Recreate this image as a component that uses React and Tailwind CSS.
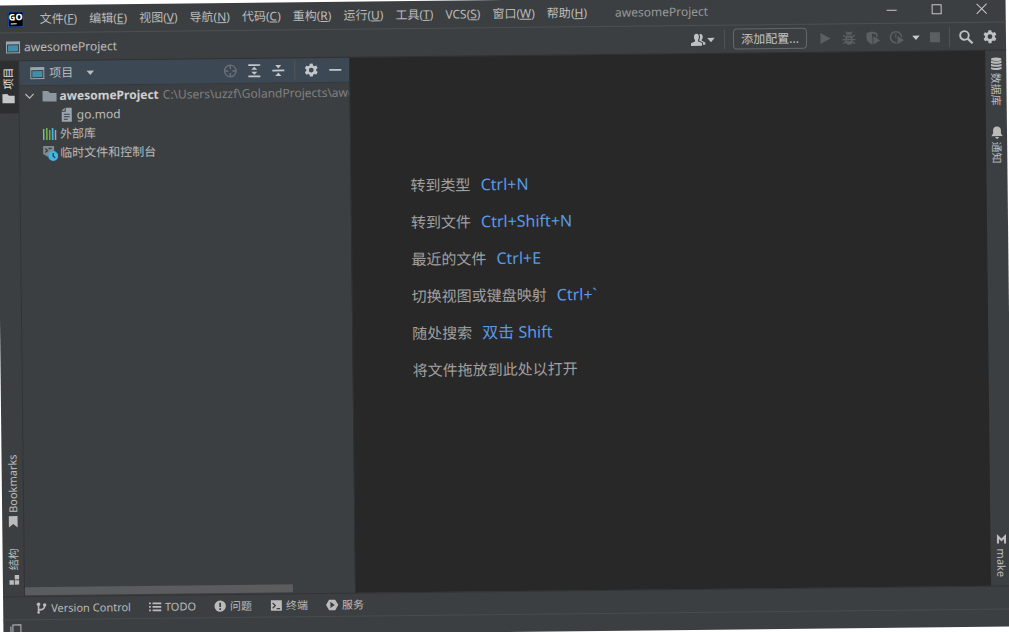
import React from 'react';

const MENUS = [
  ['文件', 'F'],
  ['编辑', 'E'],
  ['视图', 'V'],
  ['导航', 'N'],
  ['代码', 'C'],
  ['重构', 'R'],
  ['运行', 'U'],
  ['工具', 'T'],
  ['VCS', 'S'],
  ['窗口', 'W'],
  ['帮助', 'H'],
];

const HINTS = [
  { label: '转到类型', keys: 'Ctrl+N' },
  { label: '转到文件', keys: 'Ctrl+Shift+N' },
  { label: '最近的文件', keys: 'Ctrl+E' },
  { label: '切换视图或键盘映射', keys: 'Ctrl+`' },
  { label: '随处搜索', keys: '双击 Shift' },
  { label: '将文件拖放到此处以打开' },
];

const Icon = ({ size = 16, className = '', children }) => (
  <svg width={size} height={size} viewBox="0 0 16 16" fill="currentColor" className={`shrink-0 ${className}`} aria-hidden="true">
    {children}
  </svg>
);

const ProjectIcon = () => (
  <Icon>
    <path fill="#9aa7b0" d="M1 2h14v12H1z" />
    <path fill="#3c3f41" d="M2 5h12v8H2z" />
    <path fill="#3f8fa9" d="M3 6h10v6H3z" />
  </Icon>
);

const FolderIcon = ({ size, className }) => (
  <Icon size={size} className={className}>
    <path d="M1 3h5.5l2 2H15v8.5H1z" />
  </Icon>
);

const CaretIcon = () => (
  <Icon size={10}>
    <path d="M2 5h12l-6 7z" />
  </Icon>
);

const GearIcon = () => (
  <Icon>
    <path
      fillRule="evenodd"
      d="M6.6 1.5h2.8l.4 1.9 1.3.8 1.9-.7 1.4 2.5-1.5 1.3v1.4l1.5 1.3-1.4 2.5-1.9-.7-1.3.8-.4 1.9H6.6l-.4-1.9-1.3-.8-1.9.7L1.6 10l1.5-1.3V7.3L1.6 6 3 3.5l1.9.7 1.3-.8zM8 5.6a2.400 2.400 0 1 0 0 4.800 2.400 2.400 0 0 0 0-4.800z"
    />
  </Icon>
);

// small run arrow laid over another icon, outlined so it stays readable
const RunBadge = () => <path d="M8 5.500l8 5-8 5z" stroke="#3c3f41" />;

const IconButton = ({ label, className = '', children }) => (
  <button type="button" aria-label={label} className={`flex items-center justify-center ${className}`}>
    {children}
  </button>
);

const Divider = () => <span className="w-px h-5 bg-[#515456]" />;

const TitleBar = () => (
  <header className="flex items-center h-7 pl-[11px] border-b border-[#4d5052]">
    <div className="w-4 h-4 shrink-0 bg-black border border-[#1d62c4] flex flex-col items-center">
      <span className="text-[9px] leading-[9px] font-extrabold text-white">GO</span>
      <span className="w-1.5 h-px bg-white self-start ml-0.5 mt-0.5" />
    </div>
    <nav className="flex ml-4 gap-3">
      {MENUS.map(([name, key]) => (
        <button type="button" key={key} className="whitespace-nowrap">
          {name}(<span className="underline">{key}</span>)
        </button>
      ))}
    </nav>
    <h1 className="ml-7 text-[#999999]">awesomeProject</h1>
    <div className="flex ml-auto mr-4 gap-[29px] text-[#c8c8c8]">
      <IconButton label="最小化">
        <Icon>
          <path d="M3 8h10v1H3z" />
        </Icon>
      </IconButton>
      <IconButton label="最大化">
        <Icon>
          <path d="M3.5 3.5h9v9h-9z" fill="none" stroke="currentColor" />
        </Icon>
      </IconButton>
      <IconButton label="关闭">
        <Icon>
          <path d="M3 3l10 10M13 3L3 13" fill="none" stroke="currentColor" />
        </Icon>
      </IconButton>
    </div>
  </header>
);

const RunToolbar = () => (
  <div className="flex items-center h-7 px-2 border-b border-[#323232]">
    <a href="#project" className="flex items-center gap-[3px]">
      <ProjectIcon />
      awesomeProject
    </a>
    <div className="flex items-center ml-auto text-[#5c5f61]">
      <IconButton label="用户" className="text-[#bfc2c4] mr-2">
        <Icon>
          <path d="M6.5 2C8.5 2 9 3.5 9 5c0 1.500-.5 2.300-1 3v1.500l4 1.800V14H1v-2.700l4-1.800V8c-.6-.7-1-1.500-1-3 0-1.500.8-3 2.500-3z" />
          <path d="M9.500 2.300c2-.6 3.300.7 3.300 2.700 0 1.300-.5 2.200-1 2.800V9l3.500 1.600V13h-2.300v-2.300L9.300 9V7.800c.8-.9 1.200-3.500.2-5.500z" />
        </Icon>
        <CaretIcon />
      </IconButton>
      <Divider />
      <button type="button" className="h-[21px] px-[7px] ml-2 mr-1.5 border border-[#65686a] rounded text-[#c4c4c4] whitespace-nowrap">
        添加配置...
      </button>
      <div className="flex gap-2 pl-1 pr-1.5">
        <IconButton label="运行">
          <Icon>
            <path d="M3.5 2.5l10 5.500-10 5.500z" />
          </Icon>
        </IconButton>
        <IconButton label="调试">
          <Icon>
            <path d="M5 4.500a3 2.800 0 0 1 6 0z" />
            <path d="M4.500 5.500h7V11a3.500 3.500 0 0 1-7 0z" />
            <path d="M2 5l3 2M14 5l-3 2M1.500 9.500h13M2 13.500L5 11.500M14 13.500l-3-2M5 1.500l1.500 2M11 1.500l-1.500 2" stroke="currentColor" strokeWidth="1.300" />
            <path d="M6 8h4M6 10.500h4" stroke="#3c3f41" />
          </Icon>
        </IconButton>
        <IconButton label="覆盖率">
          <Icon>
            <path d="M1.500 3L7 1.500 12.500 3v5c0 3-2.500 5-5.500 6.500C4 13 1.500 11 1.500 8z" />
            <path d="M7 3.500l4 1v3H7z" fill="#3c3f41" />
            <RunBadge />
          </Icon>
        </IconButton>
        <IconButton label="性能分析" className="-mr-0.5">
          <Icon>
            <circle cx="7" cy="7.500" r="5.500" fill="none" stroke="currentColor" strokeWidth="1.500" />
            <path d="M7 4v3.500h3" fill="none" stroke="currentColor" strokeWidth="1.300" />
            <RunBadge />
          </Icon>
        </IconButton>
        <IconButton label="更多" className="-mr-0.5 text-[#c8cacc]">
          <CaretIcon />
        </IconButton>
        <IconButton label="停止">
          <Icon>
            <path d="M3 3h10v10H3z" />
          </Icon>
        </IconButton>
      </div>
      <Divider />
      <div className="flex gap-2 ml-2 text-[#bfc2c4]">
        <IconButton label="搜索">
          <Icon>
            <circle cx="6.500" cy="6.500" r="4.300" fill="none" stroke="currentColor" strokeWidth="1.900" />
            <path d="M9.500 9.500l5 5" stroke="currentColor" strokeWidth="2.200" />
          </Icon>
        </IconButton>
        <IconButton label="设置">
          <GearIcon />
        </IconButton>
      </div>
    </div>
  </div>
);

const SideTab = ({ label, icon, iconFirst, className = '', textClass = '' }) => (
  <button type="button" className={`flex flex-col items-center w-full gap-0.5 text-[11px] leading-4 ${className}`}>
    {iconFirst && icon}
    <span className={`[writing-mode:vertical-rl] [text-orientation:sideways] whitespace-nowrap ${textClass}`}>{label}</span>
    {!iconFirst && icon}
  </button>
);

const LeftStripe = () => (
  <aside className="flex flex-col w-[22px] shrink-0 border-r border-[#323435]">
    <SideTab
      label="项目"
      className="bg-[#2c2e2f] text-[#e0e0e0] pt-1.5 pb-2"
      textClass="rotate-180"
      icon={<FolderIcon size={14} className="text-[#c4c6c8]" />}
    />
    <SideTab
      label="Bookmarks"
      className="mt-auto"
      textClass="rotate-180"
      icon={
        <Icon size={14}>
          <path d="M3 2h10v13l-5-4-5 4z" />
        </Icon>
      }
    />
    <SideTab
      label="结构"
      className="mt-5 mb-2.5"
      textClass="rotate-180"
      icon={
        <Icon size={14}>
          <path d="M9 3h5v5H9zM3 9h5v5H3zM9 9h5v5H9z" />
        </Icon>
      }
    />
  </aside>
);

const RightStripe = () => (
  <aside className="flex flex-col w-[21px] shrink-0">
    <SideTab
      iconFirst
      label="数据库"
      className="mt-1.5"
      icon={
        <Icon size={14}>
          <ellipse cx="8" cy="3" rx="6" ry="2" />
          <path d="M2 4.500c2 1.600 10 1.600 12 0V7c-2 1.600-10 1.600-12 0zM2 8.200c2 1.600 10 1.600 12 0v2.300c-2 1.600-10 1.600-12 0zM2 11.800c2 1.600 10 1.600 12 0V14c-2 1.800-10 1.800-12 0z" />
        </Icon>
      }
    />
    <SideTab
      iconFirst
      label="通知"
      className="mt-5"
      icon={
        <Icon size={14}>
          <path d="M8 1c3 0 4.500 2 4.500 4.500V9l2 3h-13l2-3V5.500C3.500 3 5 1 8 1zM6 13h4c0 1.300-1 2-2 2s-2-.7-2-2z" />
        </Icon>
      }
    />
    <SideTab
      iconFirst
      label="make"
      className="mt-auto mb-2"
      icon={
        <Icon size={14}>
          <path d="M4 12.500v-8l4 4 4-4v8" fill="none" stroke="currentColor" strokeWidth="2.400" />
        </Icon>
      }
    />
  </aside>
);

const ProjectPanel = () => (
  <section id="project" className="flex flex-col w-[330px] shrink-0 overflow-hidden">
    <div className="flex items-center h-[25px] pl-2.5 pr-1.5 bg-[#3d4855] border-b border-[#36393b]">
      <ProjectIcon />
      <button type="button" className="flex items-center gap-3 ml-1">
        项目
        <CaretIcon />
      </button>
      <div className="flex items-center gap-2 ml-auto text-[#c3c7cb]">
        <IconButton label="定位" className="text-[#6b7076]">
          <Icon>
            <circle cx="8" cy="8" r="5.800" fill="none" stroke="currentColor" strokeWidth="1.300" />
            <path d="M8 2v4M8 10v4M2 8h4M10 8h4" stroke="currentColor" strokeWidth="1.500" />
          </Icon>
        </IconButton>
        <IconButton label="全部展开">
          <Icon>
            <path d="M2 1.500h12v1.700H2zM2 12.800h12v1.700H2zM8 4l3 3H5zM8 12l3-3H5z" />
          </Icon>
        </IconButton>
        <IconButton label="全部折叠">
          <Icon>
            <path d="M2 7.200h12v1.700H2zM8 6l3-3.500H5zM8 10l3 3.500H5z" />
          </Icon>
        </IconButton>
        <Divider />
        <IconButton label="选项">
          <GearIcon />
        </IconButton>
        <IconButton label="隐藏">
          <Icon>
            <path d="M2 7.200h12v1.700H2z" />
          </Icon>
        </IconButton>
      </div>
    </div>
    <ul className="whitespace-nowrap leading-[19px]">
      <li className="flex items-center pl-1">
        <Icon size={12} className="mr-1.5">
          <path d="M2.500 5L8 10.500 13.500 5" fill="none" stroke="currentColor" strokeWidth="1.600" />
        </Icon>
        <FolderIcon className="text-[#8b969e]" />
        <span className="ml-0.5 font-bold text-[#d0d0d0]">awesomeProject</span>
        <span className="ml-1 text-[#808080]">C:\Users\uzzf\GolandProjects\awesomeProject</span>
      </li>
      <li className="flex items-center pl-[39px]">
        <Icon className="text-[#9aa7b0]">
          <path d="M7 1h6v14H3V5h4z" />
          <path d="M6 1L3 4h3z" />
          <path d="M5 7.500h6M5 10h6M5 12.500h4" stroke="#3c3f41" />
        </Icon>
        <span className="ml-0.5">go.mod</span>
      </li>
      <li className="flex items-center pl-[22px]">
        <Icon>
          <path fill="#9aa7b0" d="M1 3h1.500v11H1z" />
          <path fill="#62b543" d="M4 2h1.700v12H4zM7 4h1.500v10H7z" />
          <path fill="#40b6e0" d="M9.800 2h1.700v12H9.800z" />
          <path fill="#9aa7b0" d="M12.800 4h1.500v10h-1.500z" />
        </Icon>
        <span className="ml-0.5">外部库</span>
      </li>
      <li className="flex items-center pl-[22px]">
        <Icon>
          <path fill="#7f8b91" d="M1 1h11v5.500A5.500 5.500 0 0 0 6 12L1 9z" />
          <path d="M3 3.500l2.500 2L3 7.500M6.500 3.500h3" fill="none" stroke="#3c3f41" strokeWidth="1.300" />
          <circle cx="11" cy="11" r="5" fill="#40b6e0" />
          <path d="M11 8v3.300l2 1.500" fill="none" stroke="#2b3f4a" strokeWidth="1.300" />
        </Icon>
        <span className="ml-0.5">临时文件和控制台</span>
      </li>
    </ul>
    <div className="w-[268px] h-2 mt-auto mb-px bg-[#5a5c5e]" />
  </section>
);

const Editor = () => (
  <main className="flex-1 min-w-0 bg-[#282828] border-l border-[#2f3132] pt-[110px] pl-[59px] text-[15px] leading-[37px]">
    {HINTS.map(({ label, keys }) => (
      <p key={label} className="flex gap-2.5 text-[#a0a0a0]">
        {label}
        {keys && <kbd className="font-[inherit] text-base leading-[37px] text-[#5a9ae6]">{keys}</kbd>}
      </p>
    ))}
  </main>
);

const ToolTab = ({ label, children }) => (
  <button type="button" className="flex items-center gap-[3px] whitespace-nowrap">
    <Icon size={14}>{children}</Icon>
    {label}
  </button>
);

const BottomBar = () => (
  <footer className="border-t border-[#323435]">
    <div className="flex items-center h-[22px] pl-[31px] gap-[17px] text-[11px]">
      <ToolTab label="Version Control">
        <path d="M5 3v10M5 10c5 0 7-1 7-5" fill="none" stroke="currentColor" strokeWidth="1.800" />
        <circle cx="5" cy="3.500" r="2" />
        <circle cx="5" cy="13" r="1.500" />
        <circle cx="12" cy="4.500" r="2" />
      </ToolTab>
      <ToolTab label="TODO">
        <path d="M1 3h2v2H1zM5 3h10v2H5zM1 7h2v2H1zM5 7h10v2H5zM1 11h2v2H1zM5 11h10v2H5z" />
      </ToolTab>
      <ToolTab label="问题">
        <circle cx="8" cy="8" r="6.500" />
        <path d="M7 4h2v5H7zM7 10.300h2v2H7z" fill="#3c3f41" />
      </ToolTab>
      <ToolTab label="终端">
        <path d="M2 2h12.500v12H2z" />
        <path d="M4 5l3 3-3 3M8.500 11.500h4" fill="none" stroke="#3c3f41" strokeWidth="1.500" />
      </ToolTab>
      <ToolTab label="服务">
        <path d="M4.500 2h7L15 8l-3.500 6h-7L1 8z" />
        <path d="M6 4.500l5 3.500-5 3.500z" fill="#3c3f41" />
      </ToolTab>
    </div>
    <div className="flex items-center h-[18px] pl-1 border-t border-[#484b4d]">
      <IconButton label="工具窗口">
        <Icon>
          <path d="M5.500 3.500h8v8h-8zM3.500 5v8.500H12" fill="none" stroke="currentColor" />
        </Icon>
      </IconButton>
    </div>
  </footer>
);

export default function App() {
  return (
    <div className="h-screen overflow-hidden bg-white">
      <div className="flex flex-col h-full rotate-[-0.63deg] bg-[#3c3f41] text-[#bbbbbb] text-xs font-['Noto_Sans','Noto_Sans_CJK_SC',sans-serif]">
        <TitleBar />
        <RunToolbar />
        <div className="flex flex-1 min-h-0">
          <LeftStripe />
          <ProjectPanel />
          <Editor />
          <RightStripe />
        </div>
        <BottomBar />
      </div>
    </div>
  );
}
